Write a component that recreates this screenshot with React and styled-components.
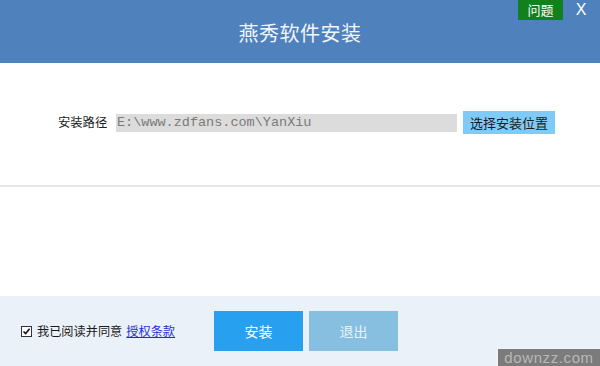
import React, { useState } from 'react';
import styled, { createGlobalStyle } from 'styled-components';

const GlobalStyle = createGlobalStyle`
  html, body {
    margin: 0;
    padding: 0;
    background: #ffffff;
  }
  body {
    font-family: "Noto Sans CJK SC", "Liberation Sans", sans-serif;
  }
`;

const Window = styled.div`
  position: relative;
  display: flex;
  flex-direction: column;
  width: 600px;
  height: 366px;
  overflow: hidden;
  background: #ffffff;
`;

const TitleBar = styled.div`
  position: relative;
  display: flex;
  align-items: center;
  justify-content: center;
  height: 63px;
  background: #4f81bd;
`;

const Title = styled.h1`
  margin: 0;
  padding-top: 2px;
  font-size: 20px;
  font-weight: 400;
  color: #f2f6fb;
  letter-spacing: 0.5px;
`;

const TopActions = styled.div`
  position: absolute;
  top: 0;
  right: 7px;
  display: flex;
  align-items: flex-start;
`;

const HelpButton = styled.button`
  width: 45px;
  height: 20px;
  padding: 0;
  border: none;
  background: #12801c;
  color: #ffffff;
  font-family: inherit;
  font-size: 13px;
  line-height: 20px;
`;

const CloseButton = styled.button`
  width: 30px;
  height: 20px;
  margin-left: 0;
  padding: 0 0 0 6px;
  border: none;
  background: transparent;
  color: #ffffff;
  font-family: "Liberation Sans", sans-serif;
  font-size: 16px;
  line-height: 20px;
`;

const Body = styled.div`
  display: flex;
  flex-direction: column;
  height: 233px;
`;

const PathRow = styled.div`
  display: flex;
  align-items: center;
  height: 23px;
  margin-top: 48px;
  padding-left: 58px;
`;

const Label = styled.span`
  width: 58px;
  font-size: 12.3px;
  color: #222222;
  line-height: 23px;
`;

const PathInput = styled.input`
  box-sizing: border-box;
  width: 341px;
  height: 18px;
  padding: 0 0 0 1px;
  border: none;
  outline: none;
  background: #dcdcdc;
  color: #7a7a7a;
  font-family: "Liberation Mono", monospace;
  font-size: 13.5px;
`;

const BrowseButton = styled.button`
  width: 92px;
  height: 23px;
  margin-left: 6px;
  padding: 0;
  border: none;
  background: #7ecbf7;
  color: #1a1a1a;
  font-family: inherit;
  font-size: 13px;
`;

const Divider = styled.hr`
  width: 100%;
  height: 2px;
  margin: 51px 0 0;
  border: none;
  background: #e6e6e6;
`;

const Footer = styled.div`
  display: flex;
  align-items: center;
  height: 70px;
  padding: 0 0 0 21px;
  background: #ebf1f8;
`;

const Agree = styled.label`
  display: flex;
  align-items: center;
  width: 193px;
  font-size: 12.2px;
  color: #1a1a1a;
`;

const Check = styled.span`
  box-sizing: border-box;
  display: inline-flex;
  align-items: center;
  justify-content: center;
  width: 11px;
  height: 11px;
  margin-right: 5px;
  border: 1px solid #333333;
  background: #ffffff;
`;

const TermsLink = styled.a`
  margin-left: 4px;
  color: #1b2fd6;
  text-decoration: underline;
`;

const ActionButton = styled.button`
  width: 89px;
  height: 40px;
  margin-right: 6px;
  padding: 0;
  border: none;
  background: ${(p) => (p.$primary ? '#27a1ef' : '#87bfe1')};
  color: ${(p) => (p.$primary ? '#ffffff' : '#e9f3fa')};
  font-family: inherit;
  font-size: 14px;
`;

const Watermark = styled.div`
  position: absolute;
  right: 0;
  bottom: 0;
  box-sizing: border-box;
  width: 103px;
  height: 18px;
  background: #7b7b7b;
  color: #b9b9b9;
  font-family: "Liberation Sans", sans-serif;
  font-size: 15px;
  line-height: 17px;
  letter-spacing: 0.6px;
  text-align: center;
  white-space: nowrap;
  border-top: 1px solid #f5f5f5;
  border-left: 1px solid #f5f5f5;
`;

export default function App() {
  const [path, setPath] = useState('E:\\www.zdfans.com\\YanXiu');
  const [agreed, setAgreed] = useState(true);

  return (
    <>
      <GlobalStyle />
      <Window>
        <TitleBar>
          <Title>燕秀软件安装</Title>
          <TopActions>
            <HelpButton type="button">问题</HelpButton>
            <CloseButton type="button">X</CloseButton>
          </TopActions>
        </TitleBar>
        <Body>
          <PathRow>
            <Label>安装路径</Label>
            <PathInput value={path} onChange={(e) => setPath(e.target.value)} />
            <BrowseButton type="button">选择安装位置</BrowseButton>
          </PathRow>
          <Divider />
        </Body>
        <Footer>
          <Agree onClick={() => setAgreed(!agreed)}>
            <Check>
              {agreed && (
                <svg width="9" height="9" viewBox="0 0 9 9">
                  <path d="M1.5 4.5 L3.6 6.6 L7.6 1.8" fill="none" stroke="#111" strokeWidth="1.6" />
                </svg>
              )}
            </Check>
            我已阅读并同意
            <TermsLink href="#">授权条款</TermsLink>
          </Agree>
          <ActionButton type="button" $primary>安装</ActionButton>
          <ActionButton type="button">退出</ActionButton>
        </Footer>
        <Watermark>downzz.com</Watermark>
      </Window>
    </>
  );
}
